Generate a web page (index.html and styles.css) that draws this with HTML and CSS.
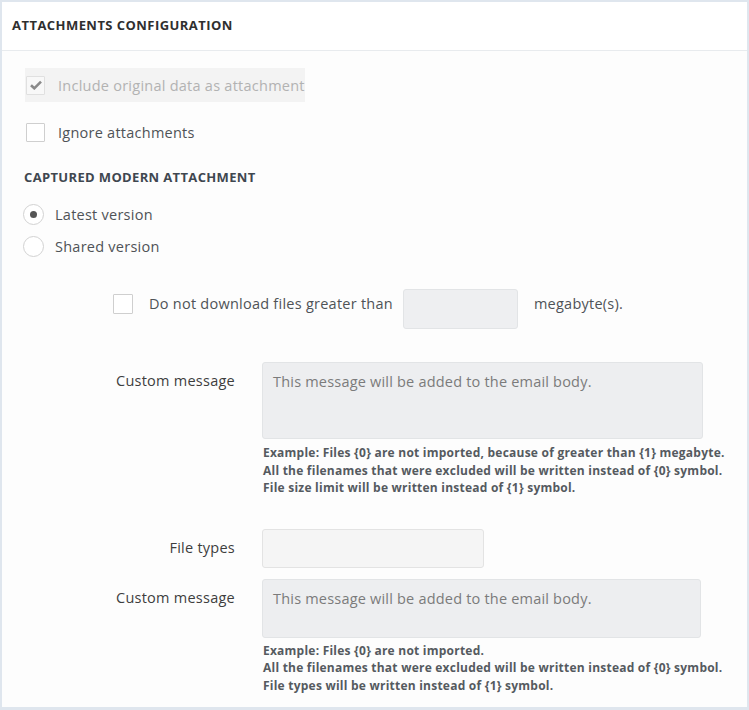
FILE: index.html
```html
<!DOCTYPE html>
<html>
<head>
<meta charset="utf-8">
<link rel="stylesheet" href="styles.css">
</head>
<body>
<div class="panel">
  <div class="panel-head">ATTACHMENTS CONFIGURATION</div>
  <div class="panel-body">
    <div class="check-row disabled">
      <span class="box checked"><svg width="12" height="10" viewBox="0 0 12 10"><path d="M1 5.2 L4.3 8.3 L11 1.6" fill="none" stroke="#8a8a8a" stroke-width="2.6" stroke-linejoin="miter"/></svg></span>
      <span class="lbl">Include original data as attachment</span>
    </div>
    <div class="check-row">
      <span class="box"></span>
      <span class="lbl">Ignore attachments</span>
    </div>
    <div class="section-title">CAPTURED MODERN ATTACHMENT</div>
    <div class="radio-row">
      <span class="radio on"></span><span class="lbl">Latest version</span>
    </div>
    <div class="radio-row">
      <span class="radio"></span><span class="lbl">Shared version</span>
    </div>
    <div class="size-row">
      <span class="box small"></span>
      <span class="lbl">Do not download files greater than</span>
      <span class="size-input"></span>
      <span class="lbl">megabyte(s).</span>
    </div>
    <div class="form-row first-msg">
      <div class="form-label">Custom message</div>
      <div class="form-field">
        <div class="textarea big">This message will be added to the email body.</div>
        <div class="help">Example: Files {0} are not imported, because of greater than {1} megabyte.<br>All the filenames that were excluded will be written instead of {0} symbol.<br>File size limit will be written instead of {1} symbol.</div>
      </div>
    </div>
    <div class="form-row types-row">
      <div class="form-label">File types</div>
      <div class="form-field">
        <div class="text-input"></div>
      </div>
    </div>
    <div class="form-row second-msg">
      <div class="form-label">Custom message</div>
      <div class="form-field">
        <div class="textarea small-ta">This message will be added to the email body.</div>
        <div class="help help2">Example: Files {0} are not imported.<br>All the filenames that were excluded will be written instead of {0} symbol.<br>File types will be written instead of {1} symbol.</div>
      </div>
    </div>
  </div>
</div>
</body>
</html>
```

FILE: styles.css
```css
* { box-sizing: border-box; }
html, body { margin: 0; padding: 0; }
body {
  background: #dfe6ee;
  font-family: "Open Sans", "Liberation Sans", sans-serif;
  color: #555;
  width: 749px;
  height: 710px;
  padding: 2px 2px 3px 2px;
}
.panel {
  background: #fdfdfd;
  height: 705px;
  overflow: hidden;
}
.panel-head {
  height: 49px;
  background: #fff;
  border-bottom: 1px solid #e8ebee;
  padding: 14px 0 0 10px;
  font-size: 13px;
  font-weight: 700;
  letter-spacing: 0.45px;
  color: #2f2f2f;
  line-height: 18px;
}
.panel-body {
  padding: 17px 0 0 22px;
}
.lbl { letter-spacing: 0.25px; }
.check-row {
  display: flex;
  align-items: center;
  height: 34px;
  font-size: 14.5px;
  color: #4f5357;
}
.check-row.disabled {
  width: 280px;
  background: #f3f3f3;
  color: #b2b2b2;
  margin-left: 1px;
}
.check-row.disabled .box { margin-left: 1px; }
.check-row + .check-row { margin-top: 13px; }
.box {
  width: 19px;
  height: 19px;
  border: 1px solid #cfcfcf;
  background: #fff;
  border-radius: 1px;
  display: inline-flex;
  align-items: center;
  justify-content: center;
  margin-left: 2px;
  margin-right: 13px;
  flex: none;
}
.box.checked { background: #f8f8f8; border-color: #e0e0e0; }
.section-title {
  margin-top: 19px;
  font-size: 13px;
  font-weight: 700;
  letter-spacing: 0.35px;
  color: #3f4750;
  height: 18px;
  line-height: 18px;
}
.radio-row {
  display: flex;
  align-items: center;
  height: 22px;
  font-size: 14.5px;
  color: #4f5357;
  margin-top: 17px;
}
.radio-row + .radio-row { margin-top: 10px; }
.radio {
  width: 21px;
  height: 21px;
  border: 1px solid #d2d2d2;
  border-radius: 50%;
  background: #fff;
  margin-left: -1px;
  margin-right: 11px;
  display: inline-flex;
  align-items: center;
  justify-content: center;
  flex: none;
}
.radio.on::after {
  content: "";
  width: 7px;
  height: 7px;
  border-radius: 50%;
  background: #555;
}
.size-row {
  display: flex;
  align-items: flex-start;
  margin-top: 32px;
  padding-left: 87px;
  height: 40px;
  font-size: 14.5px;
  color: #4f5357;
}
.size-row .lbl { padding-top: 5px; line-height: 20px; }
.size-row .box { margin: 5px 16px 0 2px; width: 20px; height: 20px; }
.size-input {
  width: 115px;
  height: 40px;
  background: #eeeff1;
  border: 1px solid #e2e4e6;
  border-radius: 3px;
  margin: 0 16px 0 10px;
}
.form-row {
  display: flex;
  align-items: flex-start;
}
.form-label {
  width: 211px;
  text-align: right;
  font-size: 14.5px;
  letter-spacing: 0.25px;
  color: #3e3e3e;
  padding-top: 9px;
  flex: none;
}
.form-field {
  margin-left: 27px;
}
.first-msg { margin-top: 33px; }
.textarea {
  background: #edeef0;
  border: 1px solid #e2e4e6;
  border-radius: 3px;
  padding: 9px 10px;
  font-size: 14.5px;
  letter-spacing: 0.2px;
  color: #7b7b7b;
  line-height: 20px;
}
.textarea.big { width: 441px; height: 77px; }
.textarea.small-ta { width: 439px; height: 59px; }
.help {
  margin-top: 5px;
  font-size: 12px;
  font-weight: 700;
  color: #555a5f;
  line-height: 17.6px;
  padding-left: 1px;
  letter-spacing: 0.23px;
}
.help2 { margin-top: 4px; }
.types-row { margin-top: 32px; }
.types-row .form-label { padding-top: 9px; }
.text-input {
  width: 222px;
  height: 39px;
  background: #f5f5f5;
  border: 1px solid #e3e3e3;
  border-radius: 3px;
}
.second-msg { margin-top: 11px; }
```
